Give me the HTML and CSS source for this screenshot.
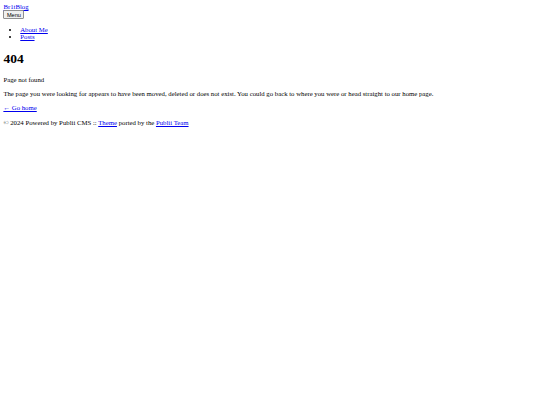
FILE: index.html
```html
<!DOCTYPE html>
<html lang="en">
<head>
    <meta charset="UTF-8">
    <meta name="viewport" content="width=device-width, initial-scale=1.0">
    <title>Page not found - Br1tBlog</title>
    <link rel="stylesheet" href="styles.css">
</head>
<body>
    <header class="header">
        <a href="#" class="logo">Br1tBlog</a>
        <div>
            <button class="menu-toggle" type="button">Menu</button>
        </div>
        <nav class="navbar">
            <ul>
                <li><a href="#">About Me</a></li>
                <li><a href="#">Posts</a></li>
            </ul>
        </nav>
    </header>

    <main class="content">
        <h1>404</h1>
        <p>Page not found</p>
        <p>The page you were looking for appears to have been moved, deleted or does not exist. You could go back to where you were or head straight to our home page.</p>
        <p><a href="#">&larr; Go home</a></p>
    </main>

    <footer class="footer">
        <p>&copy; 2024 Powered by Publii CMS :: <a href="#">Theme</a> ported by the <a href="#">Publii Team</a></p>
    </footer>
</body>
</html>
```

FILE: styles.css
```css
body {
    font-family: "Liberation Serif", serif;
    font-size: 6.75px;
    margin: 3.375px;
    color: #000;
}

a {
    color: #0000ee;
}

h1 {
    font-size: 13.5px;
    margin: 11px 0 9px;
}

p {
    margin: 6.75px 0;
}

.footer p {
    margin-top: 8px;
}

.navbar ul {
    margin: 6.75px 0;
    padding-left: 16.875px;
}

.menu-toggle {
    font-family: "Liberation Sans", Arial, sans-serif;
    font-size: 5.6px;
    background-color: #efefef;
    border: 1px solid #8f8f8f;
    border-radius: 1px;
    padding: 0.5px 2.5px;
    margin: 0;
    color: #000;
}
```
